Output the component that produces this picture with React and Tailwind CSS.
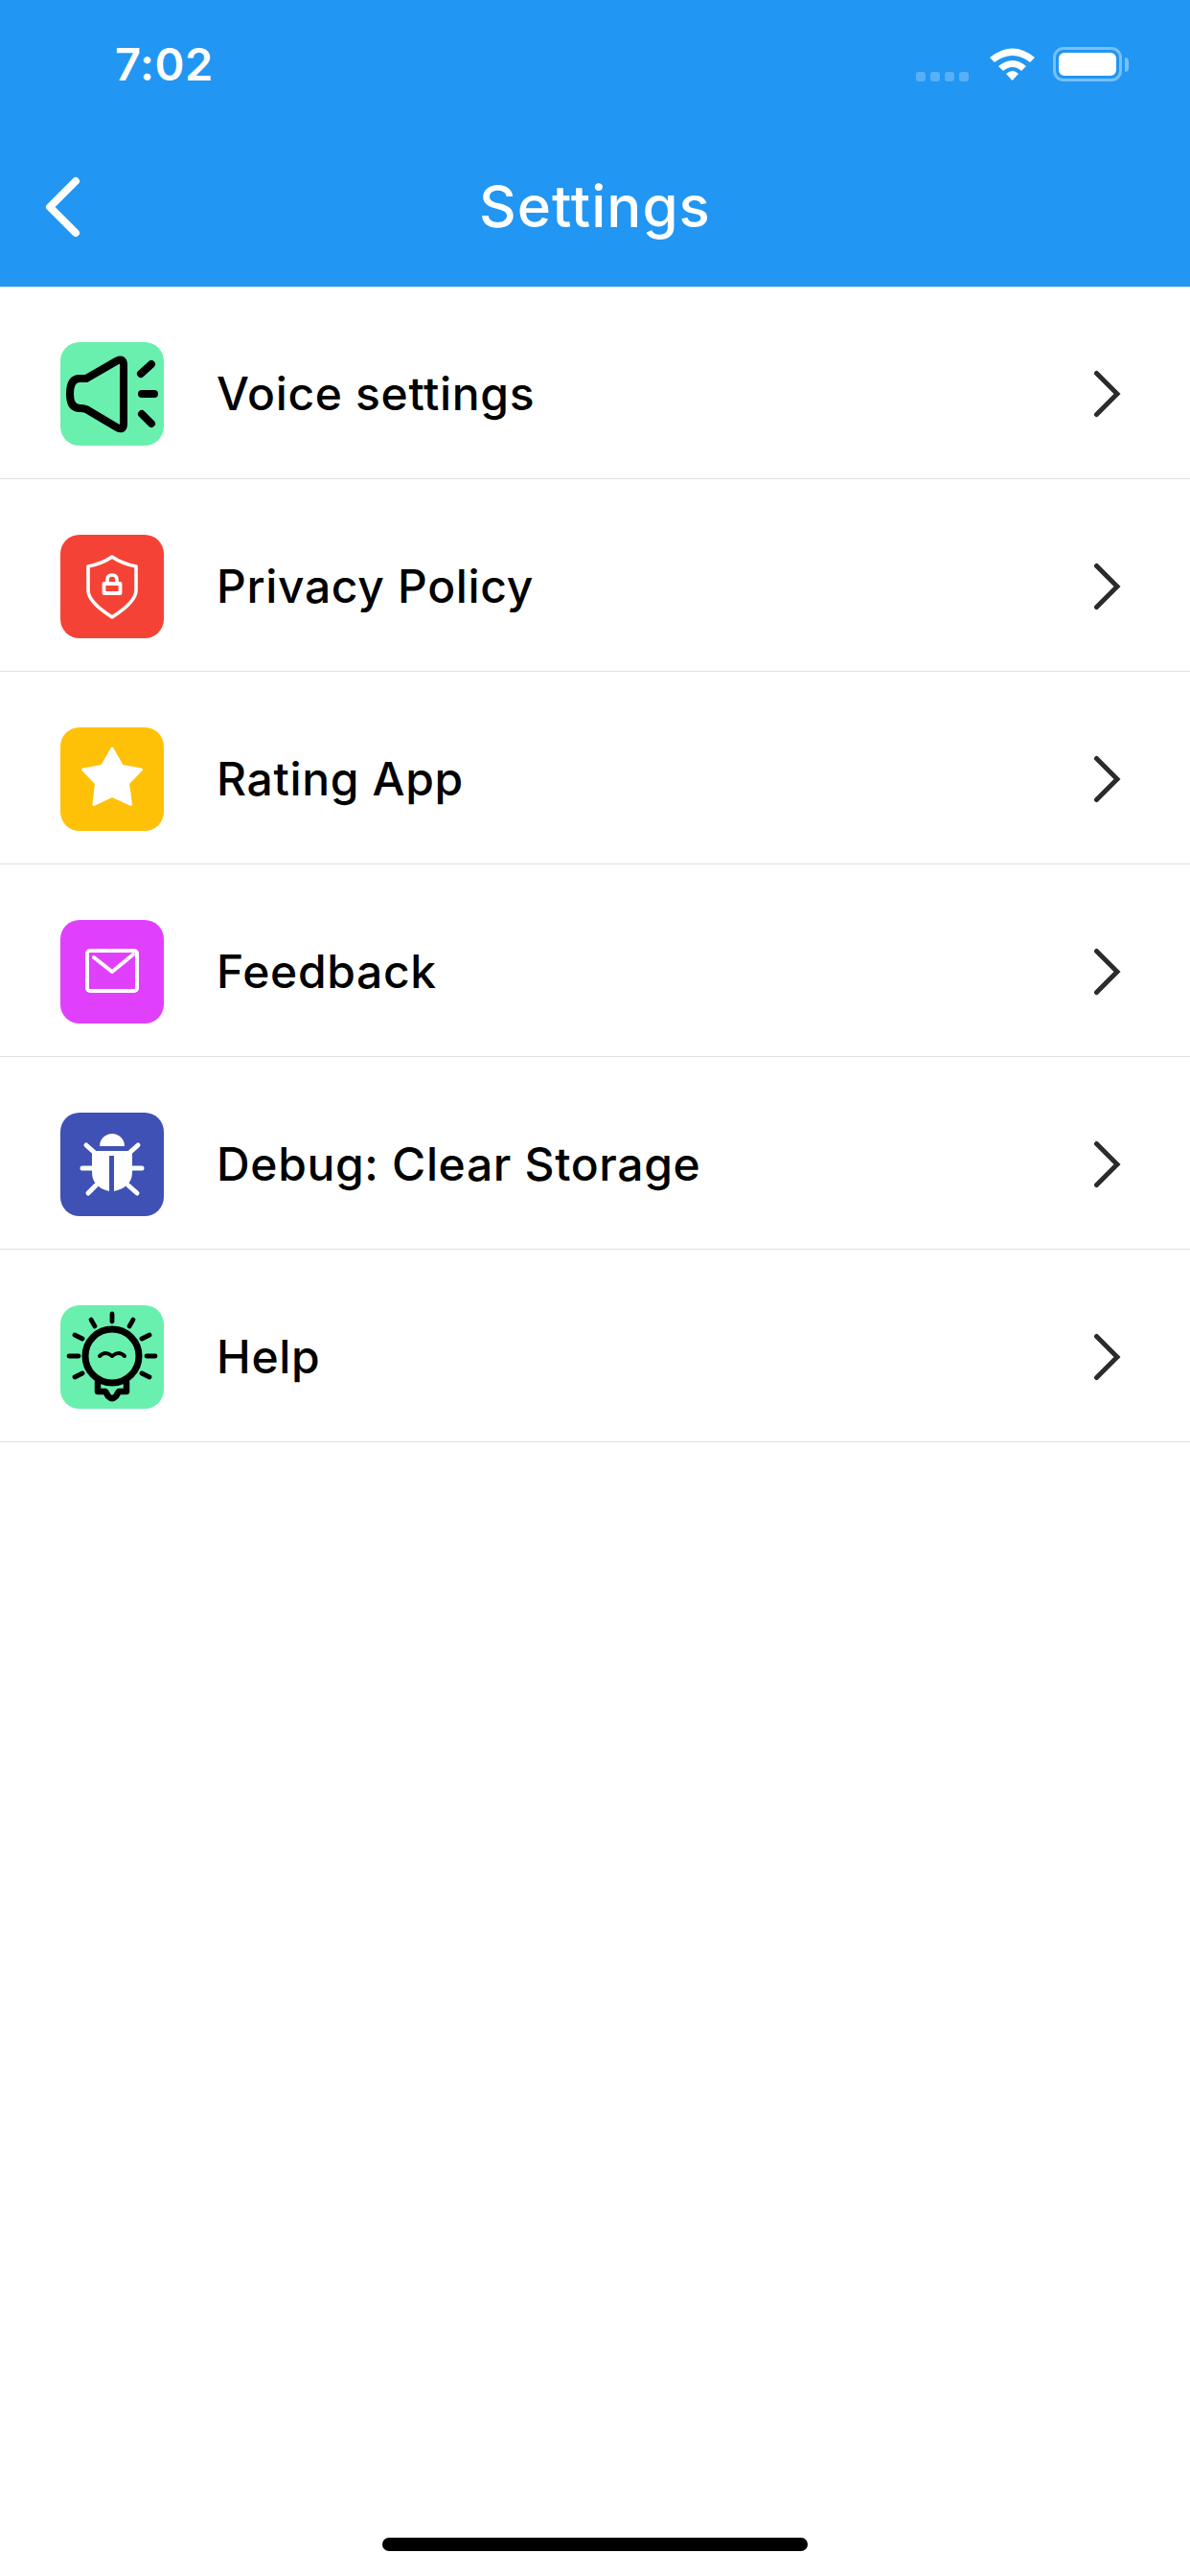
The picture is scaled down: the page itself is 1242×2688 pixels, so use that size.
const SpeakerIcon = () => (
  <svg viewBox="0 0 108 108" className="w-full h-full" fill="none" stroke="#000" strokeWidth="8" strokeLinecap="round" strokeLinejoin="round">
    <path d="M27 38 L59 19.5 Q66 16 66 24 L66 85 Q66 93 59 89 L27 70 Q24 69 20 69 Q10 69 10 54 Q10 38 20 38 Q24 38 27 38Z" />
    <path d="M84 33 L95 23 M85 54 L98 54 M85 75 L95 85" />
  </svg>
);

const ShieldIcon = () => (
  <svg viewBox="0 0 108 108" className="w-full h-full" fill="none" stroke="#fff" strokeWidth="3.6" strokeLinejoin="round">
    <path d="M54 23 Q44 30 29 33 V58 Q29 70 54 86 Q79 70 79 58 V33 Q64 30 54 23Z" />
    <rect x="45.5" y="51" width="17" height="10" strokeWidth="3.8" />
    <path d="M49 50 V47 Q49 42 54 42 Q59 42 59 47 V50" />
  </svg>
);

const StarIcon = () => (
  <svg viewBox="0 0 108 108" className="w-full h-full" fill="#fff" stroke="#fff" strokeWidth="3" strokeLinejoin="round">
    <path d="M54 22 L64.5 40.5 L84.5 44 L70.5 58.5 L73.5 80.5 L54 71.5 L35 80.5 L37.5 58.5 L23.5 44 L43.5 40.5Z" />
  </svg>
);

const MailIcon = () => (
  <svg viewBox="0 0 108 108" className="w-full h-full" fill="none" stroke="#fff" strokeWidth="4" strokeLinecap="round" strokeLinejoin="round">
    <rect x="28" y="32" width="52" height="42" rx="3" />
    <path d="M35 39 L54 54 L76 36" />
  </svg>
);

const BugIcon = () => (
  <svg viewBox="0 0 108 108" className="w-full h-full" fill="#fff">
    <path d="M41 35 A13 13 0 0 1 67 35Z" />
    <path d="M33 40 H75 V62 Q75 78 56 82 V45 H51 V82 Q33 78 33 62Z" />
    <path d="M27 34 L36 42 M81 34 L72 42 M23 58 L33 58 M75 58 L85 58 M29 84 L37 76 M80 84 L71 76" stroke="#fff" strokeWidth="5" strokeLinecap="round" fill="none" />
  </svg>
);

const BulbIcon = () => (
  <svg viewBox="0 0 108 108" className="w-full h-full" fill="none" stroke="#000" strokeLinecap="round" strokeLinejoin="round">
    <circle cx="54" cy="53" r="28" strokeWidth="7" />
    <path d="M54 9 V17 M32 15 L36 22 M76 15 L72 22 M15 31 L23 35 M93 31 L85 35 M9 53 H19 M90 53 H99 M15 75 L23 71 M93 75 L85 71" strokeWidth="4.8" />
    <path d="M39 80 V90 H47 L50 95 Q54 99 58 95 L61 90 H69 V80" strokeWidth="6.5" />
    <path d="M41 53 Q47 47 54 53 Q61 47 67 53" strokeWidth="4" />
  </svg>
);

const items = [
  { label: "Voice settings", color: "bg-[#69f0ae]", Icon: SpeakerIcon },
  { label: "Privacy Policy", color: "bg-[#f44336]", Icon: ShieldIcon },
  { label: "Rating App", color: "bg-[#ffc107]", Icon: StarIcon },
  { label: "Feedback", color: "bg-[#e040fb]", Icon: MailIcon },
  { label: "Debug: Clear Storage", color: "bg-[#3f51b5]", Icon: BugIcon },
  { label: "Help", color: "bg-[#69f0ae]", Icon: BulbIcon },
];

const App = () => {
  return (
    <div className="flex flex-col h-[2688px] bg-white font-['Inter',sans-serif] overflow-hidden">
      {/* HEADER */}
      <header className="h-[300px] shrink-0 bg-[#2196f3] text-white border-b border-[#d9d9d9]">
        {/* status bar */}
        <div className="flex items-start h-[130px] pt-[43px] pl-[120px] pr-[64px]">
          <span className="text-[47px] leading-[48px] font-semibold tracking-[0.5px]">7:02</span>
          <div className="ml-auto flex items-start mt-[6px]">
            <div className="flex gap-[5px] mt-[26px] opacity-25">
              <span className="w-[10px] h-[10px] rounded-[3px] bg-white" />
              <span className="w-[10px] h-[10px] rounded-[3px] bg-white" />
              <span className="w-[10px] h-[10px] rounded-[3px] bg-white" />
              <span className="w-[10px] h-[10px] rounded-[3px] bg-white" />
            </div>
            <svg viewBox="0 0 48 36" className="w-[48px] h-[36px] ml-[22px]" fill="#fff">
              <path d="M0 11 Q24 -8 47 11 L42 16 Q24 2 5 16Z" />
              <path d="M9 20 Q24 8 38 20 L33 25 Q24 17 14 25Z" />
              <path d="M17 28 Q24 22 30 28 L23.5 35Z" />
            </svg>
            <div className="ml-[18px] w-[72px] h-[36px] rounded-[11px] border-[3px] border-white/40 p-[3px] flex">
              <div className="flex-1 rounded-[6px] bg-white" />
            </div>
            <div className="w-[4px] h-[15px] mt-[11px] ml-[3px] rounded-r-full bg-white/40" />
          </div>
        </div>
        {/* nav bar */}
        <div className="relative flex items-center justify-center h-[169px]">
          <svg viewBox="0 0 40 64" className="absolute left-[44px] top-[54px] w-[40px] h-[64px]" fill="none" stroke="#fff" strokeWidth="8" strokeLinecap="round" strokeLinejoin="round">
            <path d="M35 5 L8 32 L35 59" />
          </svg>
          <h1 className="text-[60px] leading-[72px] font-medium tracking-[1px]">Settings</h1>
        </div>
      </header>

      {/* LIST */}
      <ul>
        {items.map(({ label, color, Icon }, i) => (
          <li key={i} className={`flex items-center pl-[63px] pr-[72px] border-b border-[#e0e0e0] pb-[34px] ${i === 0 ? "pt-[57px]" : "pt-[58px]"}`}>
            <div className={`w-[108px] h-[108px] rounded-[20px] shrink-0 ${color}`}>
              <Icon />
            </div>
            <span className="ml-[55px] text-[48px] leading-[58px] font-medium tracking-[0.65px] text-black">{label}</span>
            <svg viewBox="0 0 30 50" className="ml-auto w-[30px] h-[50px]" fill="none" stroke="#2b2b2b" strokeWidth="5" strokeLinecap="round" strokeLinejoin="miter">
              <path d="M4.5 3.5 L26 25 L4.5 46.5" />
            </svg>
          </li>
        ))}
      </ul>

      {/* HOME INDICATOR */}
      <div className="mt-auto mb-[26px] self-center w-[444px] h-[14px] rounded-full bg-black" />
    </div>
  );
};

export default App;
